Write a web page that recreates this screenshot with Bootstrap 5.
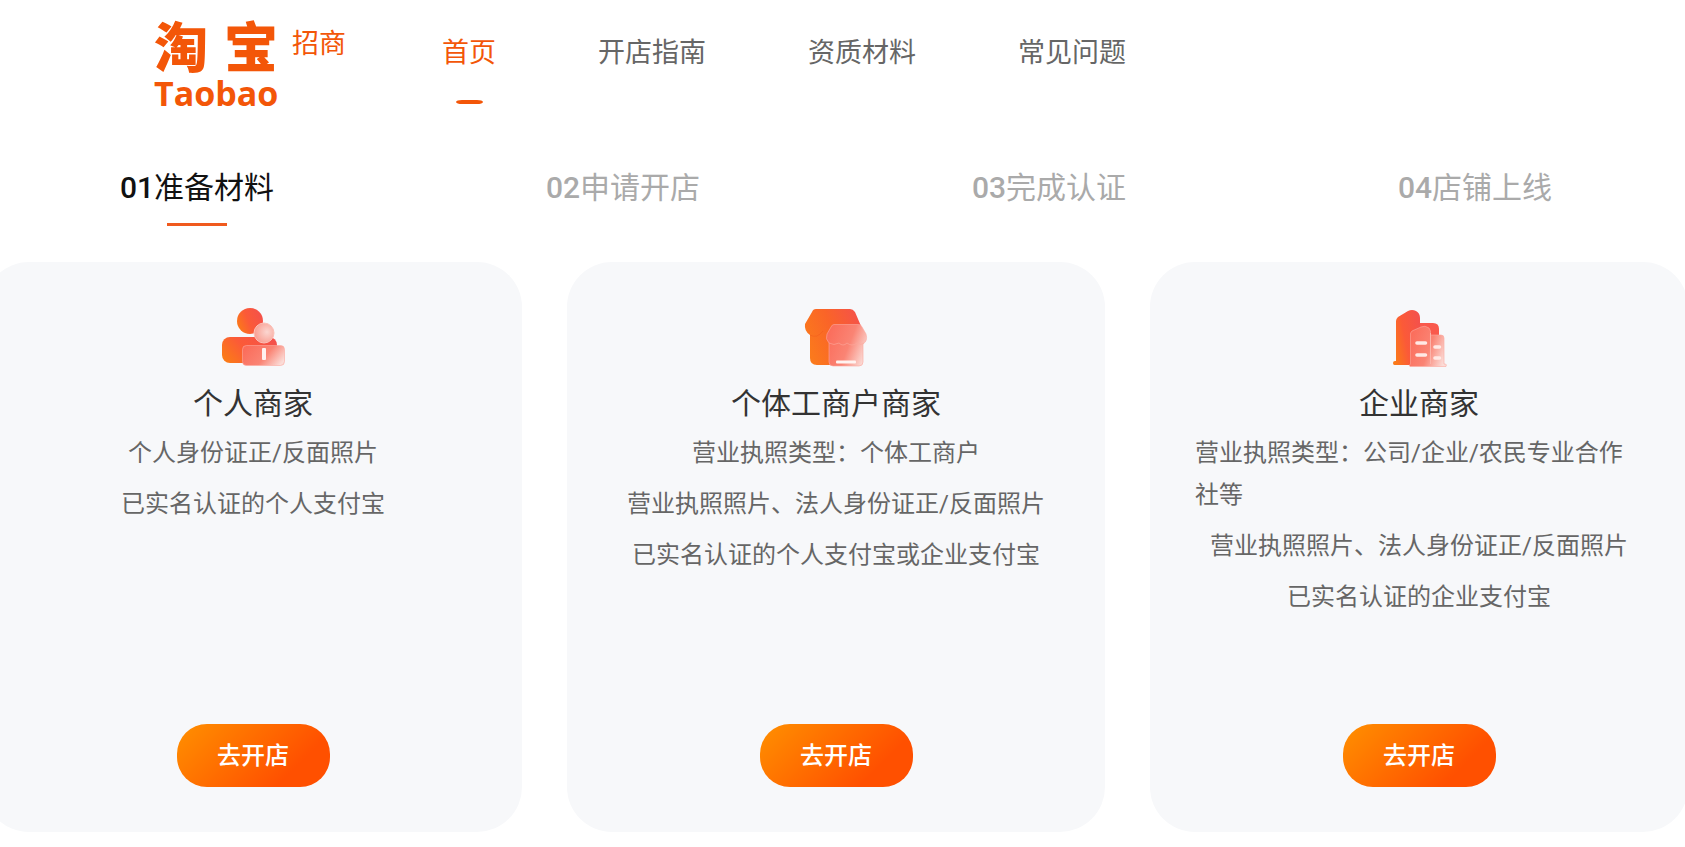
<!DOCTYPE html>
<html lang="zh-CN">
<head>
<meta charset="utf-8">
<meta name="viewport" content="width=device-width, initial-scale=1">
<title>淘宝招商</title>
<link href="https://cdn.jsdelivr.net/npm/bootstrap@5.3.0/dist/css/bootstrap.min.css" rel="stylesheet">
<style>
  body { font-family: Roboto, "Noto Sans CJK SC", sans-serif; color: #333; background: #fff; overflow-x: hidden; }
  a { text-decoration: none; }
  .site-head { padding: 20px 0 0 154px; height: 131px; }
  .brand { color: #f35608; width: 288px; gap: 14px; }
  .brand-mark { width: 124px; }
  .brand-cn { font-size: 54px; line-height: 60px; font-weight: 900; }
  .brand-en { font-family: "Open Sans", sans-serif; font-size: 34px; line-height: 26px; font-weight: 700; }
  .brand-sub { font-size: 27px; line-height: 48px; }
  .site-nav { gap: 102px; }
  .site-nav .nav-link { padding: 9px 0 0; font-size: 27px; line-height: 48px; color: #666; }
  .site-nav .nav-link.active { color: #f35608; }
  .site-nav .active::after { content: ""; display: block; width: 27px; height: 4px; margin: 23px auto 0; border-radius: 6px / 2px; background: #f35608; }
  /* the track runs slightly past both window edges */
  .track { margin: 0 -3px 0 -16px; }
  .step-link { display: inline-block; font-size: 30px; line-height: 42px; padding-top: 36px; color: #aaa; }
  .step-link b { font-weight: 500; }
  .step-link.active { color: #111; }
  .step-link.active::after { content: ""; display: block; width: 60px; height: 3px; margin: 14px auto 0; background: #f05a1e; }
  .steps { height: 131px; }
  .merchants { gap: 45px; }
  .merchant { flex: 1 1 0; min-width: 0; min-height: 570px; padding: 45px; border: 0; border-radius: 45px; background: #f7f8fa; }
  .merchant h2 { font-size: 30px; line-height: 42px; margin: 16px 0 7px; font-weight: 400; }
  .merchant ul { gap: 9px; font-size: 24px; line-height: 42px; color: #666; }
  .open-btn { width: 153px; height: 63px; border: 0; border-radius: 30px; color: #fff; font-size: 24px; font-weight: 500; background: linear-gradient(135deg, #ff9000 0%, #ff5000 75%); }
</style>
</head>
<body>
<header class="site-head d-flex align-items-start">
  <a class="brand d-flex align-items-start" href="#">
    <span class="brand-mark d-flex flex-column">
      <span class="brand-cn d-flex justify-content-between"><span>淘</span><span>宝</span></span>
      <span class="brand-en">Taobao</span>
    </span>
    <span class="brand-sub">招商</span>
  </a>
  <nav class="site-nav nav flex-nowrap">
    <a class="nav-link active" href="#">首页</a>
    <a class="nav-link" href="#">开店指南</a>
    <a class="nav-link" href="#">资质材料</a>
    <a class="nav-link" href="#">常见问题</a>
  </nav>
</header>

<main>
  <div class="track">
    <nav class="steps row g-0 text-center">
      <div class="col-3"><a class="step-link active" href="#"><b>01</b>准备材料</a></div>
      <div class="col-3"><a class="step-link" href="#"><b>02</b>申请开店</a></div>
      <div class="col-3"><a class="step-link" href="#"><b>03</b>完成认证</a></div>
      <div class="col-3"><a class="step-link" href="#"><b>04</b>店铺上线</a></div>
    </nav>

    <div class="merchants d-flex">
      <section class="merchant card align-items-center">
        <svg width="66" height="60" viewBox="20 12 66 60" aria-hidden="true">
          <defs>
            <linearGradient id="base" x1="0" y1=".7" x2="1" y2=".3"><stop offset="0" stop-color="#fb7a18"/><stop offset=".45" stop-color="#fb5a38"/><stop offset="1" stop-color="#f4514b"/></linearGradient>
            <linearGradient id="shop" x1="0" y1=".6" x2="1" y2=".2"><stop offset="0" stop-color="#fb7a1c"/><stop offset=".5" stop-color="#fa6428"/><stop offset="1" stop-color="#f5524a"/></linearGradient>
            <linearGradient id="glass" x1="0" y1=".3" x2="1" y2=".7"><stop offset="0" stop-color="#fb6d5b"/><stop offset=".55" stop-color="#fa8474"/><stop offset="1" stop-color="#fbdcd7"/></linearGradient>
            <radialGradient id="ball" cx=".65" cy=".45" r=".6"><stop offset="0" stop-color="#fbd6d0"/><stop offset="1" stop-color="#f9a195"/></radialGradient>
          </defs>
          <circle cx="50" cy="26" r="13" fill="url(#base)"/>
          <rect x="22" y="42" width="55" height="26" rx="8" fill="url(#base)"/>
          <circle cx="64" cy="38" r="10" fill="url(#ball)" stroke="#fbc0b7" stroke-width="1"/>
          <rect x="42.500" y="50.500" width="42" height="20" rx="4" fill="url(#glass)" stroke="#fba99e" stroke-opacity=".6"/>
          <rect x="62" y="53" width="4" height="12" rx="1" fill="#fff0ee"/>
        </svg>
        <h2>个人商家</h2>
        <ul class="list-unstyled d-flex flex-column align-items-center flex-grow-1 mb-0">
          <li>个人身份证正/反面照片</li>
          <li>已实名认证的个人支付宝</li>
        </ul>
        <button type="button" class="open-btn">去开店</button>
      </section>

      <section class="merchant card align-items-center">
        <svg width="66" height="60" viewBox="18 12 66 60" aria-hidden="true">
          <path d="M31 14H65Q68 14 70 17L76 31Q78 40 69 42V64Q69 70 63 70H32Q25 70 25 63V40Q19 36 20 29L27 17Q28 14 31 14Z" fill="url(#shop)"/>
          <path d="M25 40Q32 44 38 36" fill="none" stroke="#f1551c" stroke-opacity=".4"/>
          <path d="M49 29.500H73Q76 29 77 32L81 39Q83 46 78 49V67Q78 71 74 71H48Q44 71 44 67V48Q40 44 42 39L46 32Q47 29.500 49 29.500Z" fill="url(#glass)" stroke="#fba99e" stroke-opacity=".6"/>
          <path d="M44 48Q49 51 54 48Q58 52 62 48Q67 52 72 48Q76 51 79 48" fill="none" stroke="#fca99d" stroke-opacity=".6"/>
          <rect x="51" y="65.500" width="20" height="3" rx="1" fill="#fff3f0"/>
        </svg>
        <h2>个体工商户商家</h2>
        <ul class="list-unstyled d-flex flex-column align-items-center flex-grow-1 mb-0">
          <li>营业执照类型：个体工商户</li>
          <li>营业执照照片、法人身份证正/反面照片</li>
          <li>已实名认证的个人支付宝或企业支付宝</li>
        </ul>
        <button type="button" class="open-btn">去开店</button>
      </section>

      <section class="merchant card align-items-center">
        <svg width="66" height="60" viewBox="11 12 66 60" aria-hidden="true">
          <path d="M45 28H58Q64 28 64 34V68H40V28Z" fill="#f9594c"/>
          <path d="M21 66V26Q21 24 23 22L33 16Q37 14 41 16Q45 18 45 23V70H19.500Q18 70 18 68T20 66Z" fill="url(#base)"/>
          <path d="M35.500 69V40Q35 38 37 36L46 32Q50 30 54 33L55.500 36V40H66Q69 40 69 43V69H70.500Q72 69.500 71 71.500H35Q33.500 70 35.500 69Z" fill="url(#glass)" stroke="#fba99e" stroke-opacity=".6"/>
          <path d="M55.500 38V69" stroke="#fcb4aa"/>
          <path d="M42 48H50.500M42 60H50.500M60 52H64.500M60 63H64.500" stroke="#ffe9e5" stroke-width="3.600" stroke-linecap="round"/>
        </svg>
        <h2>企业商家</h2>
        <ul class="list-unstyled d-flex flex-column align-items-center flex-grow-1 mb-0">
          <li>营业执照类型：公司/企业/农民专业合作社等</li>
          <li>营业执照照片、法人身份证正/反面照片</li>
          <li>已实名认证的企业支付宝</li>
        </ul>
        <button type="button" class="open-btn">去开店</button>
      </section>
    </div>
  </div>
</main>
<script src="https://cdn.jsdelivr.net/npm/bootstrap@5.3.0/dist/js/bootstrap.bundle.min.js"></script>
</body>
</html>
